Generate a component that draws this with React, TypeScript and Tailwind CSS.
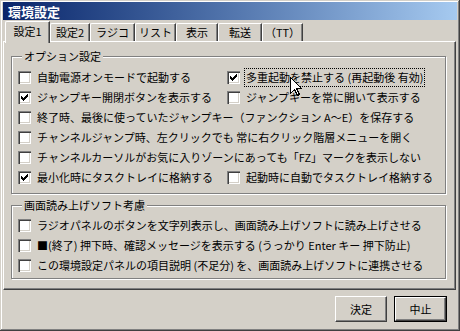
import React from "react";

function Check({ checked }: { checked?: boolean }) {
  return (
    <div className="w-[13px] h-[13px] shrink-0 bg-white shadow-[inset_1px_1px_#808080,inset_2px_2px_#404040,inset_-1px_-1px_#ffffff,inset_-2px_-2px_#d4d0c8]">
      {checked && (
        <svg width="13" height="13" viewBox="0 0 13 13" shapeRendering="crispEdges">
          <path
            d="M3 5h1v3h-1z M4 6h1v3h-1z M5 7h1v3h-1z M6 6h1v3h-1z M7 5h1v3h-1z M8 4h1v3h-1z M9 3h1v3h-1z"
            fill="#000"
          />
        </svg>
      )}
    </div>
  );
}

function Item({
  label,
  checked,
  focus,
  className = "",
}: {
  label: string;
  checked?: boolean;
  focus?: boolean;
  className?: string;
}) {
  return (
    <div className={"flex items-center h-[20px] " + className}>
      <Check checked={checked} />
      <span
        className={
          "ml-[5px] whitespace-nowrap " +
          (focus ? "outline outline-1 outline-dotted outline-black px-[1px] py-[2px]" : "px-[1px]")
        }
      >
        {label}
      </span>
    </div>
  );
}

function Tab({ label, width, selected }: { label: string; width: number; selected?: boolean }) {
  return (
    <div
      style={{ width }}
      className={
        "flex items-center justify-center bg-[#d4d0c8] border-l border-t border-white rounded-tl-[2px] border-r border-r-[#404040] shadow-[inset_-1px_0_#808080] " +
        (selected ? "h-[22px] relative z-10 pb-[2px]" : "h-[18px] mt-[2px]")
      }
    >
      {label}
    </div>
  );
}

export default function App() {
  return (
    <div className="relative w-[460px] h-[331px] bg-[#d4d0c8] text-black text-[11px] leading-[13px] font-['Noto_Sans_CJK_JP',sans-serif] shadow-[inset_-1px_-1px_#404040,inset_1px_1px_#d4d0c8,inset_-2px_-2px_#808080,inset_2px_2px_#ffffff] pt-[2px] px-[3px] overflow-hidden">
      {/* Title bar */}
      <div className="h-[18px] flex items-center pl-[5px] bg-gradient-to-r from-[#0a246a] to-[#a6caf0] text-white font-bold text-[13px]">
        環境設定
      </div>

      {/* Tabs */}
      <div className="flex items-start h-[20px] mt-[1px] pl-[2px]">
        <Tab label="設定1" width={45} selected />
        <Tab label="設定2" width={40} />
        <Tab label="ラジコ" width={45} />
        <Tab label="リスト" width={41} />
        <Tab label="表示" width={42} />
        <Tab label="転送" width={44} />
        <Tab label="（TT）" width={41} />
      </div>

      {/* Panel */}
      <div className="w-[453px] h-[249px] border-t border-l border-white border-r border-b border-r-[#404040] border-b-[#404040] shadow-[inset_-1px_-1px_#808080] pl-[7px] pt-[14px]">
        {/* Group 1 */}
        <div className="relative w-[435px] h-[138px] border border-[#808080] shadow-[inset_1px_1px_#ffffff,1px_1px_#ffffff] pt-[10px] pl-[6px]">
          <div className="absolute -top-[7px] left-[10px] bg-[#d4d0c8] px-[2px]">オプション設定</div>
          <div className="flex">
            <Item className="w-[209px]" label="自動電源オンモードで起動する" />
            <Item label="多重起動を禁止する (再起動後 有効)" checked focus />
          </div>
          <div className="flex">
            <Item className="w-[209px]" label="ジャンプキー開閉ボタンを表示する" checked />
            <Item label="ジャンプキーを常に開いて表示する" />
          </div>
          <Item label="終了時、最後に使っていたジャンプキー（ファンクション A～E）を保存する" />
          <Item label="チャンネルジャンプ時、左クリックでも 常に右クリック階層メニューを開く" />
          <Item label="チャンネルカーソルがお気に入りゾーンにあっても「FZ」マークを表示しない" />
          <div className="flex">
            <Item className="w-[209px]" label="最小化時にタスクトレイに格納する" checked />
            <Item label="起動時に自動でタスクトレイ格納する" />
          </div>
        </div>

        {/* Group 2 */}
        <div className="relative mt-[11px] w-[435px] h-[74px] border border-[#808080] shadow-[inset_1px_1px_#ffffff,1px_1px_#ffffff] pt-[9px] pl-[6px]">
          <div className="absolute -top-[7px] left-[10px] bg-[#d4d0c8] px-[2px]">画面読み上げソフト考慮</div>
          <Item label="ラジオパネルのボタンを文字列表示し、画面読み上げソフトに読み上げさせる" />
          <Item label="■(終了) 押下時、確認メッセージを表示する (うっかり Enter キー 押下防止)" />
          <Item label="この環境設定パネルの項目説明 (不足分) を、画面読み上げソフトに連携させる" />
        </div>
      </div>

      {/* Buttons */}
      <div className="flex justify-end gap-[7px] pr-[10px] mt-[6px]">
        <div className="w-[52px] h-[26px] flex items-center justify-center border-l border-t border-white border-r border-b border-r-[#404040] border-b-[#404040] shadow-[inset_-1px_-1px_#808080]">
          決定
        </div>
        <div className="w-[53px] h-[26px] border border-black">
          <div className="w-full h-full flex items-center justify-center border-l border-t border-white border-r border-b border-r-[#404040] border-b-[#404040] shadow-[inset_-1px_-1px_#808080]">
            中止
          </div>
        </div>
      </div>

      {/* Mouse cursor */}
      <svg
        className="absolute left-[290px] top-[77px] z-20"
        width="13"
        height="20"
        viewBox="0 0 13 20"
        shapeRendering="crispEdges"
      >
        <polygon
          points="0.5,0.5 0.5,16.5 4.5,12.5 7.5,18.5 9.5,17.5 6.5,11.5 11.5,11.5"
          fill="#fff"
          stroke="#000"
          strokeWidth="1"
        />
      </svg>
    </div>
  );
}
